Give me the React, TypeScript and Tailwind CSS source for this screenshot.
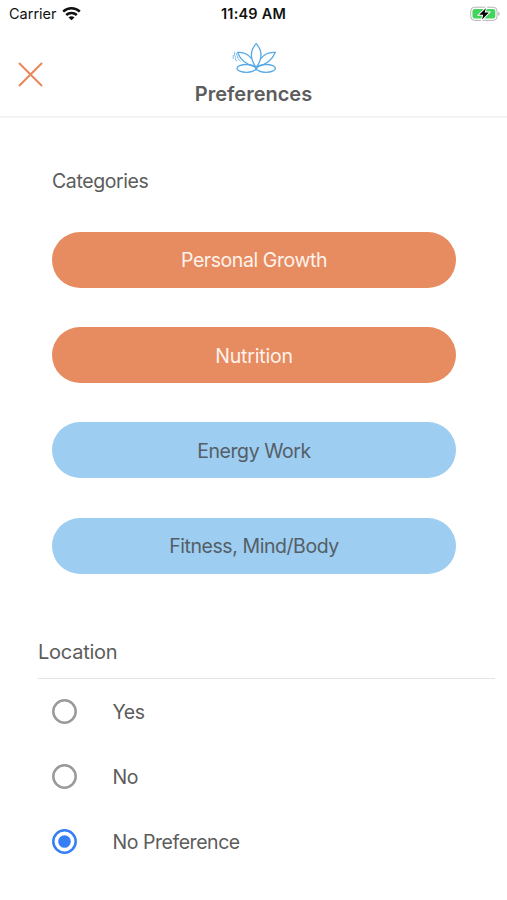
const categories = [
  { id: 1, name: 'Personal Growth', selected: true, tracking: 'tracking-[-0.43px]' },
  { id: 2, name: 'Nutrition', selected: true, tracking: 'tracking-[-0.2px]' },
  { id: 3, name: 'Energy Work', selected: false, tracking: 'tracking-[-0.43px]' },
  { id: 4, name: 'Fitness, Mind/Body', selected: false, tracking: 'tracking-[-0.43px]' },
]

const locations = [
  { id: 'yes', label: 'Yes' },
  { id: 'no', label: 'No' },
  { id: 'none', label: 'No Preference' },
]

function WifiIcon() {
  return (
    <svg width="19" height="14" viewBox="0 0 19 14" fill="none" stroke="#111" strokeWidth="2.5">
      <path d="M1.2 4.6C5.8 .2 13.2 .2 17.8 4.6" />
      <path d="M4.2 8C7.2 5.2 11.8 5.2 14.800 8" />
      <path d="M9.5 13.200 6.5 10.400C8.2 8.900 10.8 8.900 12.5 10.400Z" fill="#111" stroke="none" />
    </svg>
  )
}

function BatteryIcon() {
  return (
    <svg width="31" height="16" viewBox="0 0 31 16">
      <rect x="0.7" y="1.2" width="26.4" height="13.2" rx="4" fill="#fff" stroke="#b4b4b4" />
      <rect x="2.5" y="3" width="22.8" height="9.6" rx="2.3" fill="#43d45e" />
      <path d="M28.4 5.6c1.8.8 1.8 3.6 0 4.4Z" fill="#b4b4b4" />
      <path
        d="M15.8 2.2 9.2 8.7h4l-1.1 4.9 6.7-7h-4.1Z"
        fill="#000"
        stroke="#fff"
        strokeWidth="2"
        paintOrder="stroke"
      />
    </svg>
  )
}

function LotusIcon() {
  return (
    <svg className="ml-[2px]" width="46" height="33" viewBox="0 0 46 33" fill="none" stroke="#55a9e6" strokeWidth="1.3">
      <path d="M24.2 25.5C17.6 16.5 18 8.5 24.2 1.6c6.2 6.9 6.600 14.900 0 23.900Z" />
      <path d="M23.500 25.200C14 22.500 8 17.500 5.600 10.400c5.200-.5 10.600 1.600 14 6.300" />
      <path d="M24.900 25.200C34.400 22.500 40.400 17.500 43.200 10.400c-5.600-.5-11 1.600-14.400 6.300" />
      <ellipse cx="14.4" cy="26.4" rx="9.4" ry="3.9" />
      <ellipse cx="34" cy="26.4" rx="9.4" ry="3.9" />
      <path d="M24.200 24v4.500" />
      <path d="M2.6 10v3l1 2.5v2.500l1.700 1M1.200 13v4M4.300 11l1.800 5.500 2.400 3" strokeWidth="1" opacity="0.75" />
    </svg>
  )
}

function RadioMark({ checked }: { checked: boolean }) {
  return (
    <svg width="25" height="25" viewBox="0 0 25 25" fill="none">
      <circle cx="12.5" cy="12.5" r="11.2" stroke={checked ? '#347ff6' : '#999'} strokeWidth="2.5" />
      {checked && <circle cx="12.5" cy="12.5" r="6.3" fill="#347ff6" />}
    </svg>
  )
}

export default function App() {
  const selectedLocation = 'none'

  return (
    <div className="h-[900px] w-[507px] overflow-hidden bg-white font-[Inter,sans-serif] text-[#5c5c5c]">
      <div className="grid h-7 grid-cols-[1fr_auto_1fr] items-center text-[#111]">
        <div className="flex items-center gap-[5px] pl-[9px]">
          <span className="text-[14.5px] leading-7">Carrier</span>
          <WifiIcon />
        </div>
        <span className="text-[14.5px] leading-7 font-semibold tracking-[0.2px]">11:49 AM</span>
        <div className="flex justify-end pr-[6px]">
          <BatteryIcon />
        </div>
      </div>

      <header className="grid h-[90px] grid-cols-[60px_1fr_60px] border-b-2 border-[#f3f3f3]">
        <button aria-label="Close" className="flex items-start pt-[34px] pl-[18px]">
          <svg width="25" height="25" viewBox="0 0 25 25" stroke="#e9885e" strokeWidth="2.1">
            <path d="M1 1 24 24M24 1 1 24" />
          </svg>
        </button>
        <div className="flex flex-col items-center pt-[14px]">
          <LotusIcon />
          <h1 className="mt-[6px] text-[20px] leading-[26px] font-semibold">Preferences</h1>
        </div>
      </header>

      <section className="px-[52px] pt-[49px]">
        <h2 className="text-[19.5px] leading-7 tracking-[-0.4px]">Categories</h2>
        <div className="mt-[37px] flex flex-col gap-[39.2px]">
          {categories.map((category) => (
            <button
              key={category.id}
              className={`h-14 w-[404px] rounded-full pt-[2px] text-[19.5px] ${category.tracking} ${
                category.selected ? 'bg-[#e78b61] text-[#fff3ec]' : 'bg-[#9dcdf1] text-[#555e66]'
              }`}
            >
              {category.name}
            </button>
          ))}
        </div>
      </section>

      <section className="pt-16 pr-3 pl-[38px]">
        <h2 className="border-b border-[#e4e4e4] pb-3 text-[20px] leading-7 tracking-[-0.25px]">Location</h2>
        <div className="pt-px pl-[14px]">
          {locations.map((location) => (
            <div key={location.id} className="flex h-[64.8px] items-center gap-[35.5px]">
              <RadioMark checked={location.id === selectedLocation} />
              <span className="pt-[2px] text-[19.5px] tracking-[-0.45px]">{location.label}</span>
            </div>
          ))}
        </div>
      </section>
    </div>
  )
}
